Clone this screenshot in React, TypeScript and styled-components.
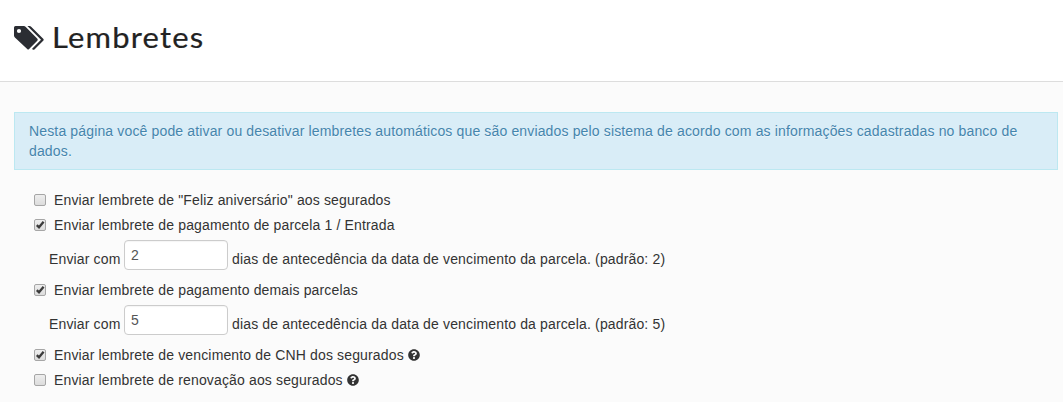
import React, { useState } from "react";
import styled, { createGlobalStyle } from "styled-components";
import { FaQuestionCircle } from "react-icons/fa";

const GlobalStyle = createGlobalStyle`
  *, *::before, *::after { box-sizing: border-box; }
  body {
    margin: 0;
    background: #fbfbfb;
    color: #333;
    font-family: "Liberation Sans", Arial, sans-serif;
    font-size: 14px;
    line-height: 20px;
    letter-spacing: 0.148px;
  }
`;

const Page = styled.div`
  min-height: 402px;
  overflow: hidden;
`;

const Header = styled.header`
  display: flex;
  align-items: flex-start;
  height: 82px;
  padding: 20px 14px 0;
  background: #fff;
  border-bottom: 1px solid #ddd;
`;

const TagsIcon = styled.svg`
  width: 30px;
  height: 24px;
  margin-top: 6px;
  fill: #2b2d33;
`;

const Title = styled.h1`
  margin: 0 0 0 8px;
  color: #222;
  font-family: Lato, sans-serif;
  font-size: 28px;
  font-weight: 400;
  line-height: 34px;
  letter-spacing: 1.1px;
  transform: scaleX(1.105);
  transform-origin: left;
  -webkit-text-stroke: 0.2px #222;
`;

const Content = styled.main`
  padding: 30px 5px 0 14px;
`;

const Alert = styled.div`
  padding: 8px 14px;
  background: #d9edf7;
  border: 1px solid #bce8f1;
  color: #4585ad;
  text-shadow: 0 1px 0 rgba(255, 255, 255, 0.5);
`;

const Form = styled.form`
  display: flex;
  flex-direction: column;
  gap: 5px;
  padding: 20px 0 0 20px;
`;

const Option = styled.label`
  display: flex;
  align-items: center;
  height: 20px;
`;

const Check = styled.input`
  flex: none;
  appearance: none;
  width: 12px;
  height: 12px;
  margin: 0;
  background: linear-gradient(#eee, #dcdcdc);
  border: 1px solid #a6a6a6;
  border-radius: 2px;
`;

const CheckBox = styled.span`
  display: grid;
  margin-right: 8px;
  > * { grid-area: 1 / 1; }
`;

const Mark = styled.svg`
  width: 12px;
  height: 12px;
  fill: none;
  stroke: #3b3b3b;
  stroke-width: 2.3;
  pointer-events: none;
`;

const Help = styled(FaQuestionCircle)`
  width: 12px;
  height: 12px;
  margin-left: 4px;
`;

const DaysRow = styled.div`
  display: flex;
  align-items: flex-start;
  height: 35px;
  padding-left: 15px;
`;

const DaysText = styled.span`
  padding-top: 9px;
`;

const DaysInput = styled.input`
  width: 104px;
  height: 30px;
  margin: 0 4px 0 3.5px;
  padding: 4px 6px;
  background: #fff;
  border: 1px solid #ccc;
  border-radius: 4px;
  color: #555;
  font: inherit;
  box-shadow: inset 0 1px 1px rgba(0, 0, 0, 0.04);
`;

function Reminder({ label, initial = false, help = false }: { label: string; initial?: boolean; help?: boolean }) {
  const [checked, setChecked] = useState(initial);
  return (
    <Option>
      <CheckBox>
        <Check type="checkbox" checked={checked} onChange={() => setChecked(!checked)} />
        {checked && (
          <Mark viewBox="0 0 12 12">
            <path d="M2.8 6.1 5 8.3 9.6 2.7" />
          </Mark>
        )}
      </CheckBox>
      {label}
      {help && <Help />}
    </Option>
  );
}

function Days({ value }: { value: number }) {
  return (
    <DaysRow>
      <DaysText>Enviar com</DaysText>
      <DaysInput defaultValue={value} />
      <DaysText>dias de antecedência da data de vencimento da parcela. (padrão: {value})</DaysText>
    </DaysRow>
  );
}

export default function App() {
  return (
    <Page>
      <GlobalStyle />
      <Header>
        <TagsIcon viewBox="0 0 30 24">
          <path fillRule="evenodd" d="M1.5 0H9.8Q10.9 0 11.8.9L23.4 12.7Q24.2 13.7 23.3 14.7L15.1 23Q14.2 24 13.2 23L.9 11.4Q0 10.5 0 9.4V1.5Q0 0 1.5 0ZM5 2.9A2.1 2.1 0 1 0 5 7.1 2.1 2.1 0 1 0 5 2.9Z" />
          <path d="M13.4 0H15.4Q16.5 0 17.4.9L29.2 12.8Q30.2 13.8 29.2 14.8L20.7 23.2Q19.5 24.2 18.4 23.2L18.1 22.8 27 13.8Z" />
        </TagsIcon>
        <Title>Lembretes</Title>
      </Header>
      <Content>
        <Alert>
          Nesta página você pode ativar ou desativar lembretes automáticos que são enviados pelo sistema de acordo com as
          informações cadastradas no banco de dados.
        </Alert>
        <Form>
          <Reminder label={'Enviar lembrete de "Feliz aniversário" aos segurados'} />
          <Reminder label="Enviar lembrete de pagamento de parcela 1 / Entrada" initial />
          <Days value={2} />
          <Reminder label="Enviar lembrete de pagamento demais parcelas" initial />
          <Days value={5} />
          <Reminder label="Enviar lembrete de vencimento de CNH dos segurados" initial help />
          <Reminder label="Enviar lembrete de renovação aos segurados" help />
        </Form>
      </Content>
    </Page>
  );
}
